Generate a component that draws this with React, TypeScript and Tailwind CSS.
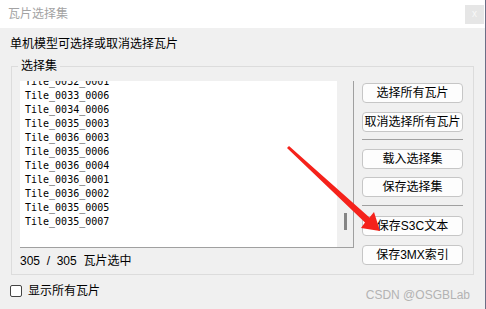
const FONT = '"Liberation Sans", "Noto Sans CJK SC", sans-serif';

const tiles = [
  "Tile_0032_0001",
  "Tile_0033_0006",
  "Tile_0034_0006",
  "Tile_0035_0003",
  "Tile_0036_0003",
  "Tile_0035_0006",
  "Tile_0036_0004",
  "Tile_0036_0001",
  "Tile_0036_0002",
  "Tile_0035_0005",
  "Tile_0035_0007",
];

function Btn({ label, className = "" }: { label: string; className?: string }) {
  return (
    <button
      className={`w-[101px] h-[20px] flex items-center justify-center bg-[#fdfdfd] border border-[#c6c6c6] rounded-[4px] text-[12px] leading-none text-black whitespace-nowrap ${className}`}
    >
      {label}
    </button>
  );
}

function Separator({ className = "" }: { className?: string }) {
  return <div className={`w-[101px] border-t border-[#a0a0a0] ${className}`} />;
}

export default function App() {
  return (
    <div
      className="relative w-[486px] h-[309px] overflow-hidden bg-[#f0f0f0] border-r border-[#6b6e86] text-black"
      style={{ fontFamily: FONT }}
    >
      {/* Title bar */}
      <div className="h-[28px] bg-white flex items-center justify-between pl-[8px] pr-[1px]">
        <span className="text-[12px] text-[#a3a3a3]">瓦片选择集</span>
        <div className="w-[19px] h-[19px] bg-[#e6e6e6] flex items-center justify-center text-[10px] leading-none text-[#f8f8f8]">
          x
        </div>
      </div>

      {/* Hint */}
      <div className="mt-[8px] ml-[10px] text-[12px] leading-[16px]">单机模型可选择或取消选择瓦片</div>

      {/* Group box */}
      <fieldset className="mt-[6px] ml-[11px] w-[463px] border border-[#dcdcdc]">
        <legend className="ml-[6px] px-[3px] text-[12px] leading-[16px]">选择集</legend>
        <div className="flex">
          {/* List + status */}
          <div className="pl-[8px] pt-[7px] pb-[5px]">
            <div className="w-[334px] h-[167px] flex bg-white border-r border-b border-[#a0a0a0]">
              <div className="flex-1 overflow-hidden pl-[5px]">
                <div className="-mt-[6px] font-['DejaVu_Sans_Mono',monospace] text-[10px] leading-[14px] text-black">
                  {tiles.map((t) => (
                    <div key={t}>{t}</div>
                  ))}
                </div>
              </div>
              <div className="w-[16px] bg-[#f0f0f0] flex flex-col justify-end items-center pb-[17px]">
                <div className="w-[3px] h-[17px] bg-[#858585]" />
              </div>
            </div>
            <div className="mt-[5px] text-[12px] leading-[16px] whitespace-pre">305  /  305  瓦片选中</div>
          </div>

          {/* Buttons */}
          <div className="ml-[8px] pt-[9px] flex flex-col">
            <Btn label="选择所有瓦片" />
            <Btn label="取消选择所有瓦片" className="mt-[9px]" />
            <Separator className="mt-[7px]" />
            <Btn label="载入选择集" className="mt-[9px]" />
            <Btn label="保存选择集" className="mt-[8px]" />
            <Separator className="mt-[8px]" />
            <Btn label="保存S3C文本" className="mt-[10px]" />
            <Btn label="保存3MX索引" className="mt-[9px]" />
          </div>
        </div>
      </fieldset>

      {/* Show all checkbox */}
      <div className="mt-[8px] ml-[10px] flex items-center gap-[6px] h-[16px]">
        <div className="w-[12px] h-[12px] rounded-[2px] border border-[#444] bg-white" />
        <span className="text-[12px] leading-[16px]">显示所有瓦片</span>
      </div>

      {/* Watermark */}
      <span className="absolute right-[15px] bottom-[6px] text-[12px] leading-[16px] text-[#b3b3b3]">
        CSDN @OSGBLab
      </span>

      {/* Red arrow annotation */}
      <svg className="absolute inset-0 pointer-events-none" width="486" height="309" viewBox="0 0 486 309">
        <polygon
          points="289,146 369.5,217.5 374,212 380,231 361,228 365,222.5 287,148"
          fill="#f5221b"
        />
      </svg>
    </div>
  );
}
